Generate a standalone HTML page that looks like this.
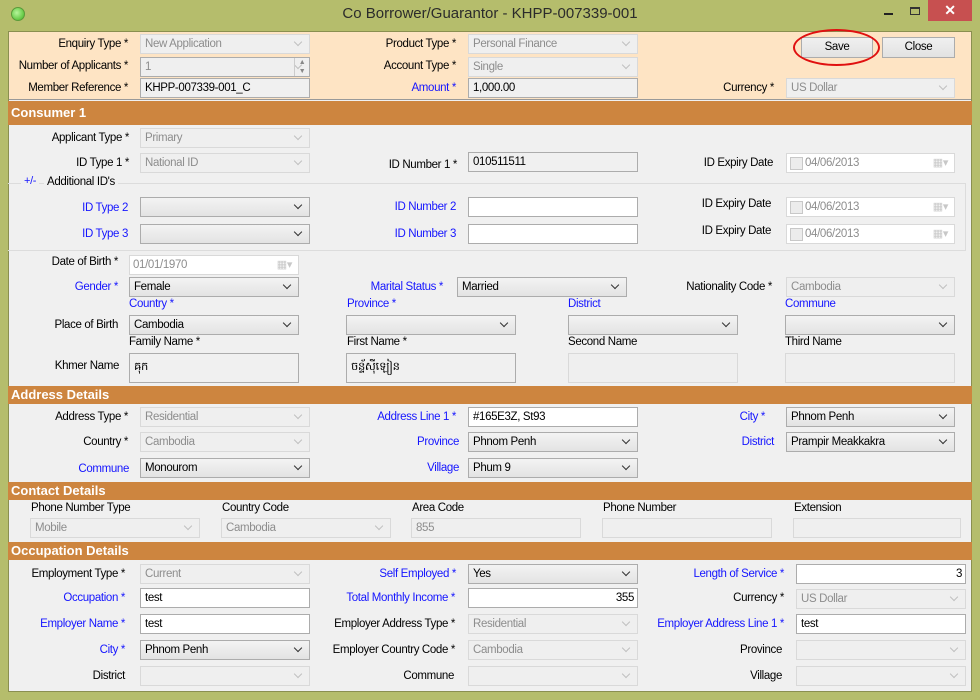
<!DOCTYPE html>
<html><head><meta charset="utf-8"><style>
*{box-sizing:border-box;margin:0;padding:0}
body{width:980px;height:700px;overflow:hidden;background:#b5bd6c;font-family:"Liberation Sans",sans-serif;font-size:11.5px;letter-spacing:-0.35px;color:#000;position:relative}
.a{position:absolute;white-space:nowrap}
.L{position:absolute;white-space:nowrap;text-align:right;line-height:16px}
.b{color:#1515ff}
.c,.e,.t,.r,.d{position:absolute;height:20px;line-height:18px;padding-left:4px;border:1px solid #d9d9d9;background:#efefef;color:#8d8d8d;overflow:hidden;white-space:nowrap}
.c::after,.e::after{content:"";position:absolute;right:8px;top:4px;width:5px;height:5px;border-right:1.5px solid #c0c0c0;border-bottom:1.5px solid #c0c0c0;transform:rotate(45deg)}
.e{border-color:#acacac;background:linear-gradient(#f3f3f3,#e3e3e3);color:#000}
.e::after{border-color:#333}
.t{background:#fff;border-color:#acacac;color:#000}
.r{background:#f0f0f0;border-color:#acacac;color:#000}
.dt{position:absolute;height:20px;line-height:18px;border:1px solid #d9d9d9;background:#fff;color:#8d8d8d;padding-left:18px}
.dt.cb::before{content:"";position:absolute;left:3px;top:3px;width:11px;height:11px;border:1px solid #c8c8c8;background:#ececec}
.dt::after{content:"▦▾";position:absolute;right:6px;top:0;color:#c8c8c8;font-size:11px}
.h{position:absolute;left:8px;width:964px;background:#cd853f;color:#fff;font-weight:bold;font-size:13px;letter-spacing:0;padding-left:3px}
.btn{position:absolute;height:21px;border:1px solid #acacac;background:linear-gradient(#f0f0f0,#e2e2e2);text-align:center;line-height:19px}
</style></head><body>
<div class="a" style="left:11px;top:7px;width:14px;height:14px;border-radius:50%;background:radial-gradient(circle at 40% 40%,#b6f59a,#3fb51f);border:1px solid #5a9a3a"></div>
<div class="a" style="left:0;width:980px;top:5px;text-align:center;font-size:15px;letter-spacing:0;color:#2b2b2b">Co Borrower/Guarantor - KHPP-007339-001</div>
<div class="a" style="left:884px;top:13px;width:9px;height:2px;background:#222"></div>
<div class="a" style="left:910px;top:7px;width:10px;height:8px;border:1px solid #333;border-top-width:2px"></div>
<div class="a" style="left:928px;top:0;width:44px;height:21px;background:#c75050;color:#fff;text-align:center;font-size:14px;line-height:21px;font-weight:bold">✕</div>
<div class="a" style="left:8px;top:31px;width:964px;height:661px;background:#f0f0f0;border:1px solid #8a8f50"></div>
<div class="a" style="left:9px;top:32px;width:962px;height:68px;background:#fee4c4;border-bottom:1px solid #999"></div>

<div class="L" style="right:852px;top:36px">Enquiry Type *</div>
<div class="c" style="left:140px;top:34px;width:170px">New Application</div>
<div class="L" style="right:852px;top:58px">Number of Applicants *</div>
<div class="c" style="left:140px;top:57px;width:170px;border-color:#acacac;color:#8d8d8d">1</div>
<div class="a" style="left:294px;top:58px;width:15px;height:18px;border-left:1px solid #ccc;font-size:7px;line-height:9px;color:#888;text-align:center">▲<br>▼</div>
<div class="L" style="right:852px;top:80px">Member Reference *</div>
<div class="r" style="left:140px;top:78px;width:170px">KHPP-007339-001_C</div>
<div class="L" style="right:524px;top:36px">Product Type *</div>
<div class="c" style="left:468px;top:34px;width:170px">Personal Finance</div>
<div class="L" style="right:524px;top:58px">Account Type *</div>
<div class="c" style="left:468px;top:57px;width:170px">Single</div>
<div class="L b" style="right:524px;top:80px">Amount *</div>
<div class="r" style="left:468px;top:78px;width:170px">1,000.00</div>
<div class="L" style="right:206px;top:80px">Currency *</div>
<div class="c" style="left:786px;top:78px;width:169px">US Dollar</div>
<div class="btn" style="left:801px;top:37px;width:72px">Save</div>
<div class="btn" style="left:882px;top:37px;width:73px">Close</div>
<div class="a" style="left:793px;top:29px;width:87px;height:37px;border:2px solid #e01010;border-radius:50%"></div>

<div class="h" style="top:101px;height:24px;line-height:24px">Consumer 1</div>
<div class="L" style="right:851px;top:130px">Applicant Type *</div>
<div class="c" style="left:140px;top:128px;width:170px">Primary</div>
<div class="L" style="right:851px;top:155px">ID Type 1 *</div>
<div class="c" style="left:140px;top:153px;width:170px">National ID</div>
<div class="L" style="right:523px;top:157px">ID Number 1 *</div>
<div class="r" style="left:468px;top:152px;width:170px">010511511</div>
<div class="L" style="right:207px;top:155px">ID Expiry Date</div>
<div class="dt cb" style="left:786px;top:153px;width:169px">04/06/2013</div>

<div class="a" style="left:8px;top:183px;width:958px;height:68px;border:1px solid #dcdcdc;border-left:none"></div>
<div class="a b" style="left:21px;top:175px;background:#f0f0f0;padding:0 3px;font-size:11px">+/-</div>
<div class="a" style="left:44px;top:176px;background:#f0f0f0;padding:0 3px">Additional ID's</div>
<div class="L b" style="right:852px;top:200px">ID Type 2</div>
<div class="e" style="left:140px;top:197px;width:170px"></div>
<div class="L b" style="right:524px;top:199px">ID Number 2</div>
<div class="t" style="left:468px;top:197px;width:170px"></div>
<div class="L" style="right:209px;top:196px">ID Expiry Date</div>
<div class="dt cb" style="left:786px;top:197px;width:169px">04/06/2013</div>
<div class="L b" style="right:852px;top:226px">ID Type 3</div>
<div class="e" style="left:140px;top:224px;width:170px"></div>
<div class="L b" style="right:524px;top:226px">ID Number 3</div>
<div class="t" style="left:468px;top:224px;width:170px"></div>
<div class="L" style="right:209px;top:223px">ID Expiry Date</div>
<div class="dt cb" style="left:786px;top:224px;width:169px">04/06/2013</div>

<div class="L" style="right:862px;top:254px">Date of Birth *</div>
<div class="dt" style="left:129px;top:255px;width:170px;padding-left:3px">01/01/1970</div>
<div class="L b" style="right:862px;top:279px">Gender *</div>
<div class="e" style="left:129px;top:277px;width:170px">Female</div>
<div class="L b" style="right:537px;top:279px">Marital Status *</div>
<div class="e" style="left:457px;top:277px;width:170px">Married</div>
<div class="L" style="right:208px;top:279px">Nationality Code *</div>
<div class="c" style="left:786px;top:277px;width:169px">Cambodia</div>
<div class="a b" style="left:129px;top:298px">Country *</div>
<div class="a b" style="left:347px;top:298px">Province *</div>
<div class="a b" style="left:568px;top:298px">District</div>
<div class="a b" style="left:785px;top:298px">Commune</div>
<div class="L" style="right:862px;top:317px">Place of Birth</div>
<div class="e" style="left:129px;top:315px;width:170px">Cambodia</div>
<div class="e" style="left:346px;top:315px;width:170px"></div>
<div class="e" style="left:568px;top:315px;width:170px"></div>
<div class="e" style="left:785px;top:315px;width:170px"></div>
<div class="a" style="left:129px;top:336px">Family Name *</div>
<div class="a" style="left:347px;top:336px">First Name *</div>
<div class="a" style="left:568px;top:336px">Second Name</div>
<div class="a" style="left:785px;top:336px">Third Name</div>
<div class="L" style="right:861px;top:358px">Khmer Name</div>
<div class="r" style="left:129px;top:353px;width:170px;height:30px;line-height:26px">ឝុក</div>
<div class="r" style="left:346px;top:353px;width:170px;height:30px;line-height:26px">ចន្ទ័ស៊ីឡៀន</div>
<div class="d" style="left:568px;top:353px;width:170px;height:30px"></div>
<div class="d" style="left:785px;top:353px;width:170px;height:30px"></div>

<div class="h" style="top:386px;height:18px;line-height:18px">Address Details</div>
<div class="L" style="right:852px;top:409px">Address Type *</div>
<div class="c" style="left:140px;top:407px;width:170px">Residential</div>
<div class="L b" style="right:524px;top:409px">Address Line 1 *</div>
<div class="t" style="left:468px;top:407px;width:170px">#165E3Z, St93</div>
<div class="L b" style="right:215px;top:409px">City *</div>
<div class="e" style="left:786px;top:407px;width:169px">Phnom Penh</div>
<div class="L" style="right:852px;top:434px">Country *</div>
<div class="c" style="left:140px;top:432px;width:170px">Cambodia</div>
<div class="L b" style="right:521px;top:434px">Province</div>
<div class="e" style="left:468px;top:432px;width:170px">Phnom Penh</div>
<div class="L b" style="right:206px;top:434px">District</div>
<div class="e" style="left:786px;top:432px;width:169px">Prampir Meakkakra</div>
<div class="L b" style="right:851px;top:461px">Commune</div>
<div class="e" style="left:140px;top:458px;width:170px">Monourom</div>
<div class="L b" style="right:521px;top:460px">Village</div>
<div class="e" style="left:468px;top:458px;width:170px">Phum 9</div>

<div class="h" style="top:482px;height:18px;line-height:18px">Contact Details</div>
<div class="a" style="left:31px;top:502px">Phone Number Type</div>
<div class="a" style="left:222px;top:502px">Country Code</div>
<div class="a" style="left:412px;top:502px">Area Code</div>
<div class="a" style="left:603px;top:502px">Phone Number</div>
<div class="a" style="left:794px;top:502px">Extension</div>
<div class="c" style="left:30px;top:518px;width:170px">Mobile</div>
<div class="c" style="left:221px;top:518px;width:170px">Cambodia</div>
<div class="d" style="left:411px;top:518px;width:170px">855</div>
<div class="d" style="left:602px;top:518px;width:170px"></div>
<div class="d" style="left:793px;top:518px;width:168px"></div>

<div class="h" style="top:542px;height:18px;line-height:18px">Occupation Details</div>
<div class="L" style="right:855px;top:566px">Employment Type *</div>
<div class="c" style="left:140px;top:564px;width:170px">Current</div>
<div class="L b" style="right:524px;top:566px">Self Employed *</div>
<div class="e" style="left:468px;top:564px;width:170px">Yes</div>
<div class="L b" style="right:196px;top:566px">Length of Service *</div>
<div class="t" style="left:796px;top:564px;width:170px;text-align:right;padding-right:3px">3</div>
<div class="L b" style="right:855px;top:590px">Occupation *</div>
<div class="t" style="left:140px;top:588px;width:170px">test</div>
<div class="L b" style="right:525px;top:590px">Total Monthly Income *</div>
<div class="t" style="left:468px;top:588px;width:170px;text-align:right;padding-right:3px">355</div>
<div class="L" style="right:196px;top:590px">Currency *</div>
<div class="c" style="left:796px;top:589px;width:170px">US Dollar</div>
<div class="L b" style="right:855px;top:616px">Employer Name *</div>
<div class="t" style="left:140px;top:614px;width:170px">test</div>
<div class="L" style="right:525px;top:616px">Employer Address Type *</div>
<div class="c" style="left:468px;top:614px;width:170px">Residential</div>
<div class="L b" style="right:196px;top:616px">Employer Address Line 1 *</div>
<div class="t" style="left:796px;top:614px;width:170px">test</div>
<div class="L b" style="right:855px;top:642px">City *</div>
<div class="e" style="left:140px;top:640px;width:170px">Phnom Penh</div>
<div class="L" style="right:525px;top:642px">Employer Country Code *</div>
<div class="c" style="left:468px;top:640px;width:170px">Cambodia</div>
<div class="L" style="right:198px;top:642px">Province</div>
<div class="c" style="left:796px;top:640px;width:170px"></div>
<div class="L" style="right:855px;top:668px">District</div>
<div class="c" style="left:140px;top:666px;width:170px"></div>
<div class="L" style="right:526px;top:668px">Commune</div>
<div class="c" style="left:468px;top:666px;width:170px"></div>
<div class="L" style="right:198px;top:668px">Village</div>
<div class="c" style="left:796px;top:666px;width:170px"></div>
</body></html>
